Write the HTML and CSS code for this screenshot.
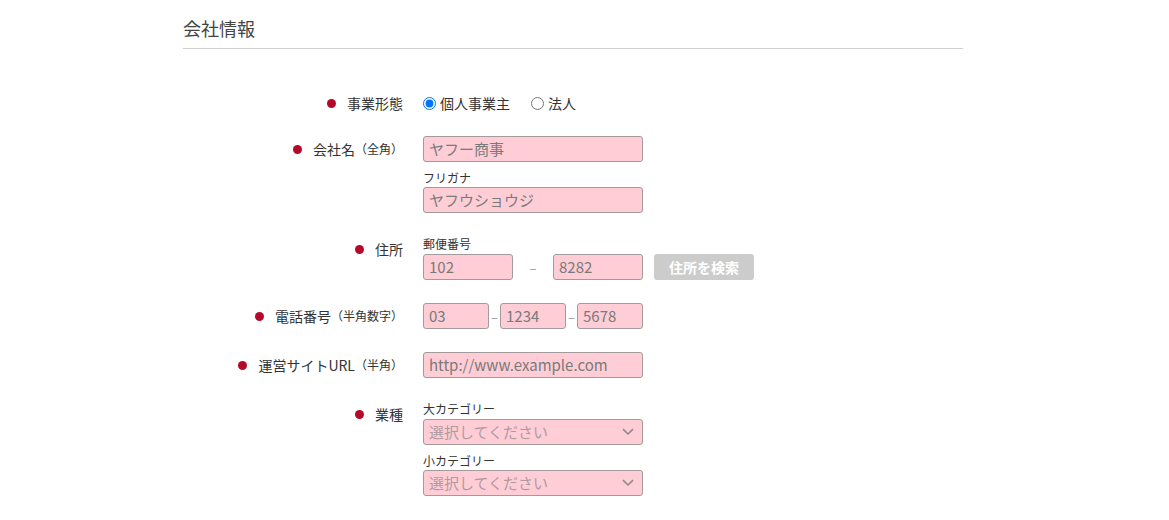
FILE: index.html
```html
<!DOCTYPE html>
<html lang="ja">
<head>
<meta charset="utf-8">
<title>会社情報</title>
<link rel="stylesheet" href="styles.css">
</head>
<body>
<div class="page">
  <h2 class="section-title">会社情報</h2>
  <div class="form">
    <div class="row">
      <div class="label label-radio"><span class="dot"></span>事業形態</div>
      <div class="field radios">
        <label class="radio"><input type="radio" name="type" checked>個人事業主</label>
        <label class="radio"><input type="radio" name="type">法人</label>
      </div>
    </div>

    <div class="row">
      <div class="label"><span class="dot"></span>会社名<span class="note">（全角）</span></div>
      <div class="field">
        <div class="input w-full">ヤフー商事</div>
        <div class="sub">フリガナ</div>
        <div class="input w-full">ヤフウショウジ</div>
      </div>
    </div>

    <div class="row">
      <div class="label"><span class="dot"></span>住所</div>
      <div class="field">
        <div class="sub first">郵便番号</div>
        <div class="line">
          <div class="input w-zip">102</div>
          <span class="dash-wide">–</span>
          <div class="input w-zip">8282</div>
          <button class="btn-search" type="button">住所を検索</button>
        </div>
      </div>
    </div>

    <div class="row">
      <div class="label"><span class="dot"></span>電話番号<span class="note">（半角数字）</span></div>
      <div class="field">
        <div class="line">
          <div class="input w-tel">03</div>
          <span class="dash">–</span>
          <div class="input w-tel">1234</div>
          <span class="dash">–</span>
          <div class="input w-tel">5678</div>
        </div>
      </div>
    </div>

    <div class="row">
      <div class="label"><span class="dot"></span>運営サイトURL<span class="note">（半角）</span></div>
      <div class="field">
        <div class="input w-full">http://www.example.com</div>
      </div>
    </div>

    <div class="row">
      <div class="label"><span class="dot"></span>業種</div>
      <div class="field">
        <div class="sub first">大カテゴリー</div>
        <div class="input w-full select">選択してください<svg class="chev" viewBox="0 0 12 8" width="12" height="8"><path d="M1 1.2 L6 6 L11 1.2" fill="none" stroke="#8a8a8a" stroke-width="1.6"/></svg></div>
        <div class="sub">小カテゴリー</div>
        <div class="input w-full select">選択してください<svg class="chev" viewBox="0 0 12 8" width="12" height="8"><path d="M1 1.2 L6 6 L11 1.2" fill="none" stroke="#8a8a8a" stroke-width="1.6"/></svg></div>
      </div>
    </div>
  </div>
</div>
</body>
</html>
```

FILE: styles.css
```css
* { box-sizing: border-box; }
html, body { margin: 0; padding: 0; background: #fff; }
body {
  font-family: "Noto Sans CJK JP", "Noto Sans", sans-serif;
  color: #333;
  font-size: 14px;
}
.page {
  margin-left: 183px;
  width: 780px;
}
.section-title {
  margin: 0;
  padding-top: 15px;
  padding-bottom: 7px;
  font-size: 18px;
  font-weight: normal;
  line-height: 26px;
  color: #444;
  border-bottom: 1px solid #cfcfcf;
}
.form {
  padding-top: 44px;
  display: flex;
  flex-direction: column;
  gap: 23px;
}
.row {
  display: grid;
  grid-template-columns: 220px 1fr;
  column-gap: 20px;
  align-items: start;
}
.label {
  display: flex;
  justify-content: flex-end;
  align-items: center;
  height: 26px;
  line-height: 26px;
  font-size: 14px;
  color: #333;
  white-space: nowrap;
}
.label-radio { height: 20px; line-height: 20px; }
.dot {
  width: 9px;
  height: 9px;
  border-radius: 50%;
  background: #b5092b;
  margin-right: 11px;
  flex: none;
}
.note { font-size: 12px; }
.field { display: flex; flex-direction: column; align-items: flex-start; }
.radios { flex-direction: row; align-items: center; height: 20px; gap: 21px; }
.radio { display: flex; align-items: center; font-size: 14px; line-height: 20px; }
.radio input { margin: 0 4px 0 0; width: 13px; height: 13px; }
.sub {
  font-size: 12px;
  line-height: 15px;
  color: #333;
  margin-top: 8px;
  margin-bottom: 2px;
}
.sub.first { margin-top: 0; margin-bottom: 3px; }
.input {
  height: 26px;
  line-height: 24px;
  background: #ffcdd5;
  border: 1px solid #a39a9c;
  border-radius: 3px;
  padding: 0 5px;
  font-size: 15px;
  color: #7a7a7a;
  white-space: nowrap;
}
.w-full { width: 220px; }
.w-zip { width: 90px; }
.w-tel { width: 66px; }
.line { display: flex; align-items: center; }
.dash-wide { width: 40px; text-align: center; color: #999; font-size: 13px; }
.dash { width: 11px; text-align: center; color: #999; font-size: 13px; }
.btn-search {
  margin-left: 11px;
  width: 100px;
  height: 26px;
  border: none;
  border-radius: 3px;
  background: #cccccc;
  color: #fff;
  font-family: inherit;
  font-weight: bold;
  font-size: 14px;
  padding: 0;
}
.select {
  display: flex;
  justify-content: space-between;
  align-items: center;
  color: #b09aa0;
  padding-right: 8px;
}
.chev { flex: none; }
```
